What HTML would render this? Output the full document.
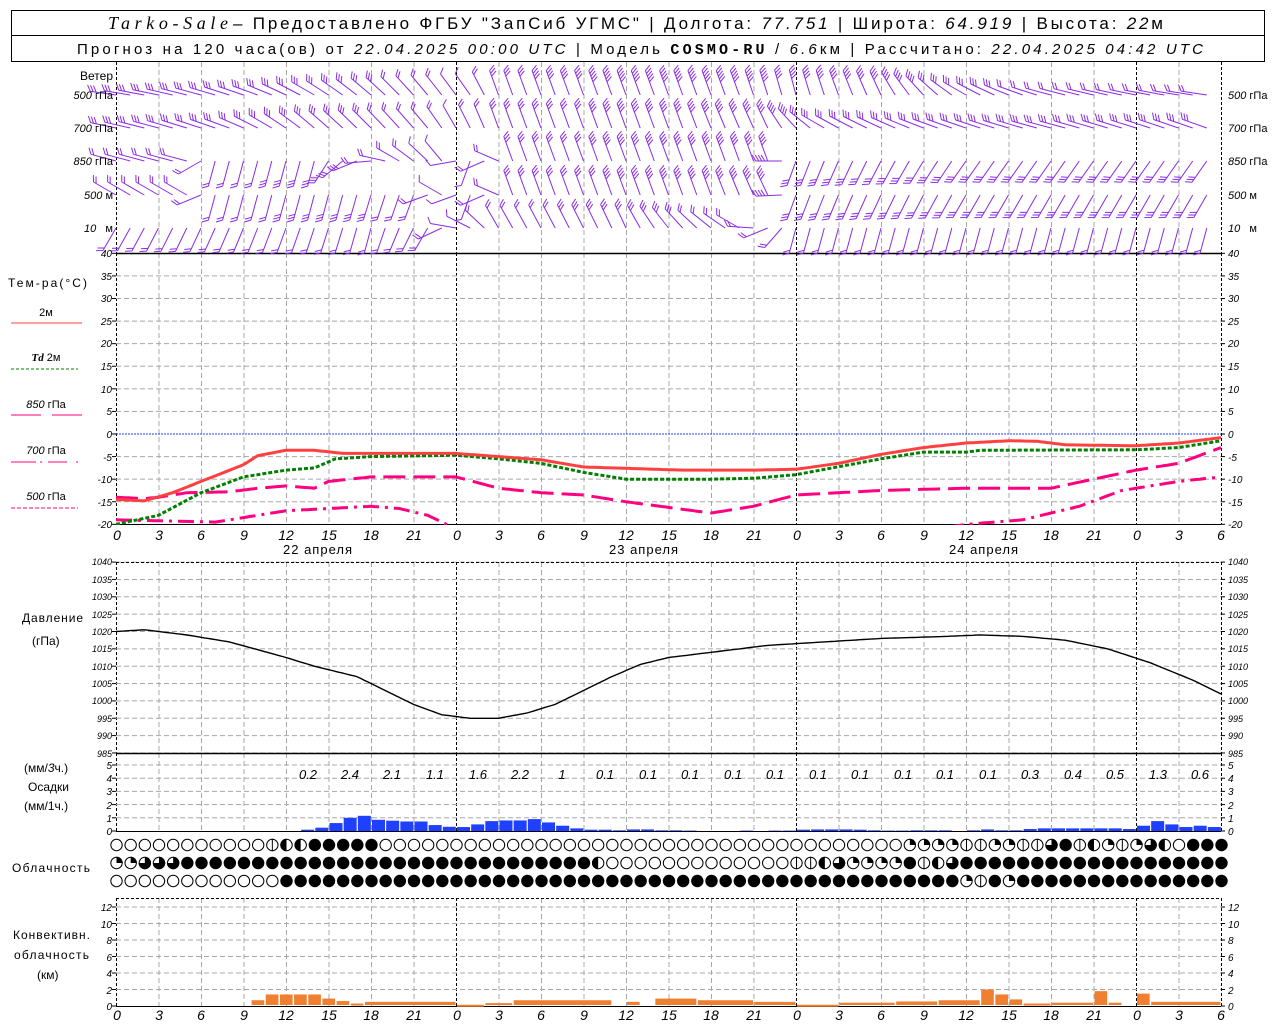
<!DOCTYPE html>
<html><head><meta charset="utf-8">
<style>
html,body{margin:0;padding:0;background:#fff;}
svg{display:block;}
text{font-family:"Liberation Sans","DejaVu Sans",sans-serif;fill:#000;}
.ax{font-size:11px;font-style:italic;}
.axs{font-size:9px;font-style:italic;}
.axt{font-size:10px;font-style:italic;}
.lb{font-size:12px;}
.xl{font-size:14px;font-style:italic;}
.pr{font-size:13px;font-style:italic;}
</style></head><body>
<svg id="s" width="1280" height="1024" viewBox="0 0 1280 1024" xmlns="http://www.w3.org/2000/svg">
<rect x="11.5" y="10.5" width="1253" height="25" fill="none" stroke="#000"/>
<rect x="11.5" y="35.5" width="1253" height="26" fill="none" stroke="#000"/>
<text x="108" y="29" font-size="18" textLength="120" lengthAdjust="spacing" style="font-family:'Liberation Serif',serif;font-style:italic">Tarko-Sale</text>
<text x="233" y="29" font-size="17" textLength="930" lengthAdjust="spacing">– Предоставлено ФГБУ "ЗапСиб УГМС" | Долгота: <tspan font-style="italic">77.751</tspan> | Широта: <tspan font-style="italic">64.919</tspan> | Высота: <tspan font-style="italic">22</tspan>м</text>
<text x="77" y="54" font-size="15" textLength="1126" lengthAdjust="spacing">Прогноз на 120 часа(ов) от <tspan font-style="italic">22.04.2025 00:00 UTC</tspan>  | Модель <tspan font-weight="bold" style="font-family:'Liberation Mono',monospace">COSMO-RU</tspan> / <tspan font-style="italic">6.6</tspan>км | Рассчитано: <tspan font-style="italic">22.04.2025 04:42 UTC</tspan></text>

<g id="g"></g>

<!-- wind labels -->
<text x="113" y="80" class="lb" text-anchor="end">Ветер</text>
<text x="113" y="99" class="ax" text-anchor="end">500 <tspan font-style="normal">гПа</tspan></text>
<text x="113" y="132" class="ax" text-anchor="end">700 <tspan font-style="normal">гПа</tspan></text>
<text x="113" y="165" class="ax" text-anchor="end">850 <tspan font-style="normal">гПа</tspan></text>
<text x="113" y="199" class="ax" text-anchor="end">500 <tspan font-style="normal">м</tspan></text>
<text x="113" y="232" class="ax" text-anchor="end">10 <tspan font-style="normal">&#160;&#160;м</tspan></text>
<text x="1228" y="99" class="ax">500 <tspan font-style="normal">гПа</tspan></text>
<text x="1228" y="132" class="ax">700 <tspan font-style="normal">гПа</tspan></text>
<text x="1228" y="165" class="ax">850 <tspan font-style="normal">гПа</tspan></text>
<text x="1228" y="199" class="ax">500 <tspan font-style="normal">м</tspan></text>
<text x="1228" y="232" class="ax">10 <tspan font-style="normal">&#160;&#160;м</tspan></text>

<!-- temp legend -->
<text x="8" y="287" class="lb" textLength="79" lengthAdjust="spacing">Тем-ра(°C)</text>
<text x="46" y="316" font-size="11" text-anchor="middle">2м</text>
<text x="46" y="361" font-size="11" text-anchor="middle"><tspan font-style="italic" font-weight="bold" style="font-family:'Liberation Serif',serif">Td</tspan>  2м</text>
<text x="46" y="408" font-size="11" text-anchor="middle"><tspan font-style="italic">850</tspan> гПа</text>
<text x="46" y="454" font-size="11" text-anchor="middle"><tspan font-style="italic">700</tspan> гПа</text>
<text x="46" y="500" font-size="11" text-anchor="middle"><tspan font-style="italic">500</tspan> гПа</text>

<!-- x labels temp -->
<g class="xl">
<text x="117" y="540" text-anchor="middle">0</text><text x="159" y="540" text-anchor="middle">3</text><text x="201" y="540" text-anchor="middle">6</text><text x="244" y="540" text-anchor="middle">9</text><text x="286" y="540" text-anchor="middle">12</text><text x="329" y="540" text-anchor="middle">15</text><text x="371" y="540" text-anchor="middle">18</text><text x="414" y="540" text-anchor="middle">21</text>
<text x="457" y="540" text-anchor="middle">0</text><text x="499" y="540" text-anchor="middle">3</text><text x="541" y="540" text-anchor="middle">6</text><text x="584" y="540" text-anchor="middle">9</text><text x="626" y="540" text-anchor="middle">12</text><text x="669" y="540" text-anchor="middle">15</text><text x="711" y="540" text-anchor="middle">18</text><text x="754" y="540" text-anchor="middle">21</text>
<text x="797" y="540" text-anchor="middle">0</text><text x="839" y="540" text-anchor="middle">3</text><text x="881" y="540" text-anchor="middle">6</text><text x="924" y="540" text-anchor="middle">9</text><text x="966" y="540" text-anchor="middle">12</text><text x="1009" y="540" text-anchor="middle">15</text><text x="1051" y="540" text-anchor="middle">18</text><text x="1094" y="540" text-anchor="middle">21</text>
<text x="1137" y="540" text-anchor="middle">0</text><text x="1179" y="540" text-anchor="middle">3</text><text x="1221" y="540" text-anchor="middle">6</text>
</g>
<text x="318" y="554" font-size="13" text-anchor="middle" letter-spacing="1">22 апреля</text>
<text x="644" y="554" font-size="13" text-anchor="middle" letter-spacing="1">23 апреля</text>
<text x="984" y="554" font-size="13" text-anchor="middle" letter-spacing="1">24 апреля</text>

<!-- pressure -->
<text x="22" y="622" class="lb" textLength="61" lengthAdjust="spacing">Давление</text>
<text x="32" y="645" class="lb">(гПа)</text>

<!-- precip -->
<text x="24" y="772" class="lb">(мм/<tspan font-style="italic">3</tspan>ч.)</text>
<text x="28" y="791" class="lb">Осадки</text>
<text x="24" y="810" class="lb">(мм/1ч.)</text>
<g class="pr" text-anchor="middle">
<text x="308" y="779">0.2</text><text x="350" y="779">2.4</text><text x="392" y="779">2.1</text><text x="435" y="779">1.1</text><text x="478" y="779">1.6</text><text x="520" y="779">2.2</text><text x="562" y="779">1</text><text x="605" y="779">0.1</text><text x="648" y="779">0.1</text><text x="690" y="779">0.1</text><text x="733" y="779">0.1</text><text x="775" y="779">0.1</text><text x="818" y="779">0.1</text><text x="860" y="779">0.1</text><text x="903" y="779">0.1</text><text x="945" y="779">0.1</text><text x="988" y="779">0.1</text><text x="1030" y="779">0.3</text><text x="1073" y="779">0.4</text><text x="1115" y="779">0.5</text><text x="1158" y="779">1.3</text><text x="1200" y="779">0.6</text>
</g>

<text x="12" y="872" class="lb" textLength="78" lengthAdjust="spacing">Облачность</text>

<!-- convective -->
<text x="13" y="939" class="lb" textLength="77" lengthAdjust="spacing">Конвективн.</text>
<text x="14" y="959" class="lb" textLength="75" lengthAdjust="spacing">облачность</text>
<text x="37" y="979" class="lb">(км)</text>
<g class="xl">
<text x="117" y="1020" text-anchor="middle">0</text><text x="159" y="1020" text-anchor="middle">3</text><text x="201" y="1020" text-anchor="middle">6</text><text x="244" y="1020" text-anchor="middle">9</text><text x="286" y="1020" text-anchor="middle">12</text><text x="329" y="1020" text-anchor="middle">15</text><text x="371" y="1020" text-anchor="middle">18</text><text x="414" y="1020" text-anchor="middle">21</text>
<text x="457" y="1020" text-anchor="middle">0</text><text x="499" y="1020" text-anchor="middle">3</text><text x="541" y="1020" text-anchor="middle">6</text><text x="584" y="1020" text-anchor="middle">9</text><text x="626" y="1020" text-anchor="middle">12</text><text x="669" y="1020" text-anchor="middle">15</text><text x="711" y="1020" text-anchor="middle">18</text><text x="754" y="1020" text-anchor="middle">21</text>
<text x="797" y="1020" text-anchor="middle">0</text><text x="839" y="1020" text-anchor="middle">3</text><text x="881" y="1020" text-anchor="middle">6</text><text x="924" y="1020" text-anchor="middle">9</text><text x="966" y="1020" text-anchor="middle">12</text><text x="1009" y="1020" text-anchor="middle">15</text><text x="1051" y="1020" text-anchor="middle">18</text><text x="1094" y="1020" text-anchor="middle">21</text>
<text x="1137" y="1020" text-anchor="middle">0</text><text x="1179" y="1020" text-anchor="middle">3</text><text x="1221" y="1020" text-anchor="middle">6</text>
</g>

<!-- axis numeric labels -->
<g class="axt">
<text x="1228" y="257">40</text><text x="1228" y="280">35</text><text x="1228" y="302">30</text><text x="1228" y="325">25</text><text x="1228" y="347">20</text><text x="1228" y="370">15</text><text x="1228" y="393">10</text><text x="1228" y="415">5</text><text x="1228" y="438">0</text><text x="1228" y="461">-5</text><text x="1228" y="483">-10</text><text x="1228" y="506">-15</text><text x="1228" y="528">-20</text>
</g>
<g class="axt" text-anchor="end">
<text x="112" y="257">40</text><text x="112" y="280">35</text><text x="112" y="302">30</text><text x="112" y="325">25</text><text x="112" y="347">20</text><text x="112" y="370">15</text><text x="112" y="393">10</text><text x="112" y="415">5</text><text x="112" y="438">0</text><text x="112" y="461">-5</text><text x="112" y="483">-10</text><text x="112" y="506">-15</text><text x="112" y="528">-20</text>
</g>
<g class="axs" text-anchor="end">
<text x="112" y="565">1040</text><text x="112" y="583">1035</text><text x="112" y="600">1030</text><text x="112" y="618">1025</text><text x="112" y="635">1020</text><text x="112" y="652">1015</text><text x="112" y="670">1010</text><text x="112" y="687">1005</text><text x="112" y="704">1000</text><text x="112" y="722">995</text><text x="112" y="739">990</text><text x="112" y="757">985</text>
</g>
<g class="axs">
<text x="1228" y="565">1040</text><text x="1228" y="583">1035</text><text x="1228" y="600">1030</text><text x="1228" y="618">1025</text><text x="1228" y="635">1020</text><text x="1228" y="652">1015</text><text x="1228" y="670">1010</text><text x="1228" y="687">1005</text><text x="1228" y="704">1000</text><text x="1228" y="722">995</text><text x="1228" y="739">990</text><text x="1228" y="757">985</text>
</g>
<g class="axt" text-anchor="end">
<text x="112" y="769">5</text><text x="112" y="782">4</text><text x="112" y="795">3</text><text x="112" y="809">2</text><text x="112" y="822">1</text><text x="112" y="835">0</text>
</g>
<g class="axt">
<text x="1228" y="769">5</text><text x="1228" y="782">4</text><text x="1228" y="795">3</text><text x="1228" y="809">2</text><text x="1228" y="822">1</text><text x="1228" y="835">0</text>
</g>
<g class="axt" text-anchor="end">
<text x="112" y="911">12</text><text x="112" y="928">10</text><text x="112" y="944">8</text><text x="112" y="961">6</text><text x="112" y="977">4</text><text x="112" y="994">2</text><text x="112" y="1010">0</text>
</g>
<g class="axt">
<text x="1228" y="911">12</text><text x="1228" y="928">10</text><text x="1228" y="944">8</text><text x="1228" y="961">6</text><text x="1228" y="977">4</text><text x="1228" y="994">2</text><text x="1228" y="1010">0</text>
</g>
</svg>
<script>
(function(){
var NS="http://www.w3.org/2000/svg",g=document.getElementById("g");
function el(n,a){var e=document.createElementNS(NS,n);for(var k in a)e.setAttribute(k,a[k]);g.appendChild(e);return e;}
function X(h){return 116+h*340/24;}
function interp(kf,h){for(var i=0;i<kf.length-1;i++){if(h<=kf[i+1][0]){var a=kf[i],b=kf[i+1],t=(h-a[0])/(b[0]-a[0]);return a[1]+(b[1]-a[1])*t;}}return kf[kf.length-1][1];}
function line(x1,y1,x2,y2,s,w,d){var a={x1:x1,y1:y1,x2:x2,y2:y2,stroke:s,"stroke-width":w||1};if(d)a["stroke-dasharray"]=d;el("line",a);}
var panels=[[62,253],[253,524],[562,753],[753,831],[898,1006]];
panels.forEach(function(p){
  for(var h=3;h<78;h+=3){if(h%24)line(X(h)+.5,p[0],X(h)+.5,p[1],"#a8a8a8",1,"5,3");}
  [0,24,48,72,78].forEach(function(h){line(Math.round(X(h))+.5,p[0],Math.round(X(h))+.5,p[1],"#000",1,"3,2");});
});
for(var t=-20;t<=35;t+=5){var y=434-t*4.517;line(116,y,1221,y,t==0?"#2040ff":"#a8a8a8",1,t==0?"2,1":"5,3");}
for(var p=985;p<=1040;p+=5){var y=631.5-(p-1020)*3.47;line(116,y,1221,y,"#a8a8a8",1,"5,3");}
for(var r=1;r<=5;r++){var y=831-r*13.2;line(116,y,1221,y,"#a8a8a8",1,"5,3");}
for(var c=2;c<=12;c+=2){var y=1006-c*8.25;line(116,y,1221,y,"#a8a8a8",1,"5,3");}
line(116,253.5,1221,253.5,"#000",1.5);line(116,753.5,1221,753.5,"#000",1.5);line(116,562.5,1221,562.5,"#000",1,"3,2");
line(116,831.5,1221,831.5,"#000",1);line(116,1006.5,1221,1006.5,"#000",1);line(116,524.5,1221,524.5,"#000",1);
line(116,898.5,1221,898.5,"#000",1,"3,2");
function ticks(arr){arr.forEach(function(y){line(112,y,116,y,"#000",1);line(1221,y,1225,y,"#000",1);});}
var tk=[];for(var t=-20;t<=40;t+=5)tk.push(434-t*4.517);ticks(tk);
tk=[];for(var p=985;p<=1040;p+=5)tk.push(631.5-(p-1020)*3.47);ticks(tk);
tk=[];for(var r=0;r<=5;r++)tk.push(831-r*13.2);ticks(tk);
tk=[];for(var c=0;c<=12;c+=2)tk.push(1006-c*8.25);ticks(tk);

function curve(kf,fy,h0,h1,st,w,dash,clip){var pts=[];for(var h=h0;h<=h1;h+=0.25){var y=fy(interp(kf,h));pts.push(X(h).toFixed(1)+","+y.toFixed(1));}
 var a={points:pts.join(" "),fill:"none",stroke:st,"stroke-width":w};if(dash)a["stroke-dasharray"]=dash;if(clip)a["clip-path"]="url(#ct)";el("polyline",a);}
var cp=el("clipPath",{id:"ct"});var rr=document.createElementNS(NS,"rect");rr.setAttribute("x",116);rr.setAttribute("y",253);rr.setAttribute("width",1105);rr.setAttribute("height",272);cp.appendChild(rr);
var TY=function(t){return 434-t*4.517;};
line(11,323,82,323,"#ff4040",1);line(11,369,78,369,"#008000",1,"3,2");
line(11,415,41,415,"#ff0080",1);line(52,415,82,415,"#ff0080",1);
line(11,462,36,462,"#ff0080",1);line(40,462,42,462,"#ff0080",1);line(48,462,67,462,"#ff0080",1);line(76,462,78,462,"#ff0080",1);
line(11,508,78,508,"#ff0080",1,"4,2");
curve([[0,-14],[2,-14.3],[3,-14],[4,-13.5],[5,-13],[8,-12.8],[10,-12],[12,-11.5],[14,-12],[15,-10.5],[18,-9.5],[24,-9.5],[27,-12],[30,-13],[33,-13.5],[36,-15],[42,-17.5],[45,-16],[48,-13.5],[54,-12.5],[60,-12],[66,-12],[69,-10],[72,-8],[75,-6.5],[78,-3]],TY,0,78,"#ff0080",3,"22,8",1);
curve([[0,-19],[7,-19.5],[9,-18.5],[12,-17],[18,-16],[20,-16.5],[22,-18],[24,-21],[58,-21],[60,-20],[64,-19],[68,-16],[71,-12.5],[72,-12],[75,-10.5],[78,-9.5]],TY,0,78,"#ff0080",3,"16,6,3,6",1);
curve([[0,-20],[3,-18],[6,-13],[9,-9.5],[12,-8],[14,-7.5],[15.5,-5.5],[18,-5],[24,-4.7],[27,-5.5],[30,-6.5],[33,-8.5],[36,-10],[42,-10],[45,-9.8],[48,-9],[54,-5.5],[57,-4],[60,-4],[61,-3.6],[72,-3.5],[75,-3],[78,-1.5]],TY,0,78,"#008000",3,"4,2",1);
curve([[0,-14.5],[2,-14.8],[4,-13],[6,-10.5],[9,-6.8],[10,-4.8],[12,-3.6],[14,-3.6],[16,-4.3],[24,-4.3],[27,-5],[30,-5.7],[33,-7.3],[36,-7.6],[40,-8],[45,-8],[48,-7.8],[51,-6.5],[54,-4.5],[57,-3],[60,-2],[63,-1.5],[65,-1.6],[67,-2.4],[72,-2.6],[75,-2],[78,-0.8]],TY,0,78,"#ff4040",3,null,1);
curve([[0,1020],[2,1020.5],[5,1019],[8,1017],[12,1012.5],[14,1010],[17,1007],[19,1003],[21,999],[23,996],[25,995],[27,995],[29,996.5],[31,999],[33,1003],[35,1007],[37,1010.5],[39,1012.5],[42,1014],[46,1016],[50,1017],[54,1018],[58,1018.5],[61,1019],[64,1018.6],[67,1017.5],[70,1015],[73,1011],[76,1006],[78,1002]],function(p){return 631.5-(p-1020)*3.47;},0,78,"#000",1.4);
var pr={13:.1,14:.25,15:.6,16:1,17:1.15,18:.85,19:.78,20:.72,21:.72,22:.45,23:.32,24:.3,25:.5,26:.75,27:.8,28:.8,29:.9,30:.65,31:.4,32:.2,33:.1,34:.1,35:.05,36:.12,37:.12,38:.05,39:.05,40:.03,44:.03,46:.03,47:.03,48:.1,49:.12,50:.12,51:.12,52:.1,53:.05,54:.03,55:.03,56:.05,57:.05,58:.05,60:.05,61:.12,62:.05,63:.05,64:.15,65:.2,66:.2,67:.2,68:.2,69:.2,70:.2,71:.15,72:.4,73:.75,74:.5,75:.3,76:.4,77:.3};
for(var k in pr){var h=+k,y=831-pr[k]*13.2;el("rect",{x:X(h)+1,y:y,width:13,height:831-y,fill:"#2040ff"});}
var cv=[[9.5,10.5,.7],[10.5,11.5,1.4],[11.5,12.5,1.4],[12.5,13.5,1.4],[13.5,14.5,1.4],[14.5,15.5,.9],[15.5,16.5,.6],[16.5,17.5,.3],[17.5,24,.5],[24,26,.15],[26,28,.35],[28,35,.7],[36,37,.5],[38,41,.9],[41,45,.7],[45,48,.5],[48,51,.15],[51,55,.4],[55,58,.55],[58,61,.7],[61,62,2],[62,63,1.4],[63,64,.8],[64,66,.3],[66,69,.4],[69,70,1.8],[70,71,.4],[72,73,1.5],[73,78,.5]];
cv.forEach(function(c){var y=1006-c[2]*8.25;el("rect",{x:X(c[0])+1,y:y,width:X(c[1])-X(c[0])-1.5,height:Math.max(2,1006-y-1),fill:"#f08030"});});
var rows=[
 [845,"ooooooooooovhhfffffoooo"+"o".repeat(33)+"qqqqvvqqvvtfvhqvqtho"],
 [863,"qqttt"+"f".repeat(29)+"h"+"o".repeat(13)+"vvht"+"qqqqfvhtf"+"f".repeat(20)],
 [881,"oooooooooooo"+"f".repeat(48)+"qvfq"+"f".repeat(20)]
];
rows.forEach(function(r){var y=r[0];for(var h=0;h<=78;h++){var ch=r[1][h]||"f",cx=X(h)+0.5,R=6.2;
 if(ch=="f"){el("circle",{cx:cx,cy:y,r:R,fill:"#000"});continue;}
 el("circle",{cx:cx,cy:y,r:R-.5,fill:"#fff",stroke:"#000","stroke-width":1});
 if(ch=="v")line(cx,y-R,cx,y+R,"#000",1);
 if(ch=="h")el("path",{d:"M"+cx+","+(y-R)+" A"+R+","+R+" 0 0 0 "+cx+","+(y+R)+"Z",fill:"#000"});
 if(ch=="q")el("path",{d:"M"+cx+","+y+" L"+cx+","+(y-R)+" A"+R+","+R+" 0 0 1 "+(cx+R)+","+y+"Z",fill:"#000"});
 if(ch=="t")el("path",{d:"M"+cx+","+y+" L"+cx+","+(y-R)+" A"+R+","+R+" 0 1 1 "+(cx-R)+","+y+"Z",fill:"#000"});
}});
var lv=[
 [95,[[0,278,3],[10,290,3],[16,305,3],[22,320,2],[25,325,1],[27,340,3],[36,340,5],[44,340,5],[48,345,4],[54,335,4],[60,300,3],[66,285,2],[78,278,2]]],
 [128,[[0,282,3],[8,290,3],[14,310,3],[22,320,2],[24,330,1],[27,340,3],[40,340,4],[46,335,4],[50,300,3],[58,290,3],[66,285,3],[78,290,3]]],
 [161,[[0,285,2],[5,285,2],[7,195,2],[14,195,3],[20,300,2],[23,320,1],[25,200,1],[28,340,3],[40,340,4],[46,340,4],[48,200,3],[60,215,3],[70,215,3],[78,215,3]]],
 [195,[[0,300,2],[5,300,2],[7,195,2],[16,195,3],[21,200,2],[23,300,1],[25,200,1],[28,340,3],[42,340,4],[46,335,4],[48,200,3],[60,210,3],[70,210,3],[78,210,3]]],
 [228,[[0,210,2],[6,205,2],[12,200,2],[18,195,2],[22,210,2],[24,280,1],[27,330,2],[36,335,3],[44,300,2],[48,195,2],[58,195,2],[70,195,2],[78,195,2]]]
];
lv.forEach(function(L){var y0=L[0];for(var h=0;h<=77;h++){
 var a=interp(L[1].map(function(k){return [k[0],k[1]];}),h)*Math.PI/180,n=Math.round(interp(L[1].map(function(k){return [k[0],k[2]];}),h));
 var dx=Math.sin(a),dy=-Math.cos(a),x0=X(h),len=26;
 var ex=x0+dx*len,ey=y0+dy*len;
 var d="M"+x0.toFixed(1)+","+y0+" L"+ex.toFixed(1)+","+ey.toFixed(1);
 var fa=a+Math.PI*0.33,fx=Math.sin(fa),fy=-Math.cos(fa);
 for(var i=0;i<n;i++){var sx=ex-dx*i*3,sy=ey-dy*i*3;d+=" M"+sx.toFixed(1)+","+sy.toFixed(1)+" l"+(fx*7).toFixed(1)+","+(fy*7).toFixed(1);}
 el("path",{d:d,stroke:"#8a2be2","stroke-width":1,fill:"none"});
}});
})();
</script>
</body></html>
